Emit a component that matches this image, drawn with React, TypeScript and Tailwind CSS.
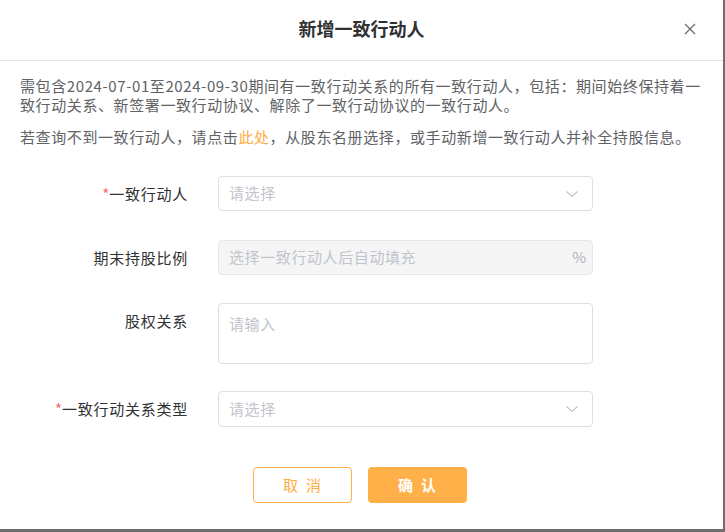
import React from 'react';

const font = { fontFamily: '"Microsoft YaHei", "Noto Sans CJK SC", "Noto Sans", sans-serif' };

function Chevron() {
  return (
    <svg width="14" height="14" viewBox="0 0 14 14" fill="none" className="text-[#c0c4cc]">
      <path d="M1.5 4.5l5.5 5 5.5-5" stroke="currentColor" strokeWidth="1.1" />
    </svg>
  );
}

function Label({ text, required }: { text: string; required?: boolean }) {
  return (
    <div className="w-[188px] shrink-0 text-right text-[15px] leading-[35px] tracking-[0.75px] text-[#303133]">
      {required && <span className="text-[#f56c6c] tracking-normal">*</span>}
      {text}
    </div>
  );
}

export default function App() {
  return (
    <div className="w-[725px] h-[532px] bg-[#6e6e6e] overflow-hidden" style={font}>
      <div className="w-[723px] h-[529px] bg-white flex flex-col">
        {/* Header */}
        <div className="relative h-[61px] shrink-0 border-b border-[#e4e4e4] flex items-center justify-center pb-[3px]">
          <span className="text-[18px] font-bold text-[#303133]">新增一致行动人</span>
          <svg className="absolute right-[27px] top-[23px]" width="12" height="12" viewBox="0 0 12 12" fill="none">
            <path d="M1 1l10 10M11 1L1 11" stroke="#666" strokeWidth="1.1" />
          </svg>
        </div>

        {/* Notice */}
        <div className="px-[20px] pt-[15px] text-[15px] leading-[19px] tracking-[0.6px] text-[#606266]">
          <p>
            <span className="block whitespace-nowrap">需包含2024-07-01至2024-09-30期间有一致行动关系的所有一致行动人，包括：期间始终保持着一</span>
            <span className="block whitespace-nowrap">致行动关系、新签署一致行动协议、解除了一致行动协议的一致行动人。</span>
          </p>
          <p className="mt-[13px] whitespace-nowrap">
            若查询不到一致行动人，请点击<span className="text-[#ffad42]">此处</span>，从股东名册选择，或手动新增一致行动人并补全持股信息。
          </p>
        </div>

        {/* Form */}
        <div className="mt-[30px] flex flex-col">
          <div className="flex items-start gap-[30px]">
            <Label text="一致行动人" required />
            <div className="w-[375px] h-[35px] border border-[#dcdfe6] rounded-[4px] flex items-center justify-between pl-[10px] pr-[13px]">
              <span className="text-[15px] tracking-[0.6px] text-[#c0c4cc]">请选择</span>
              <Chevron />
            </div>
          </div>

          <div className="flex items-start gap-[30px] mt-[29px]">
            <Label text="期末持股比例" />
            <div className="w-[375px] h-[35px] border border-[#e4e7ed] bg-[#f5f5f6] rounded-[4px] flex items-center justify-between pl-[10px] pr-[6px]">
              <span className="text-[15px] tracking-[0.6px] text-[#c0c4cc]">选择一致行动人后自动填充</span>
              <span className="text-[15px] text-[#b0b3b8]">%</span>
            </div>
          </div>

          <div className="flex items-start gap-[30px] mt-[28px]">
            <Label text="股权关系" />
            <div className="w-[375px] h-[61px] border border-[#dcdfe6] rounded-[4px] pl-[10px] pt-[7px]">
              <span className="text-[15px] leading-[19px] tracking-[0.6px] text-[#c0c4cc]">请输入</span>
            </div>
          </div>

          <div className="flex items-start gap-[30px] mt-[27px]">
            <Label text="一致行动关系类型" required />
            <div className="w-[375px] h-[36px] border border-[#dcdfe6] rounded-[4px] flex items-center justify-between pl-[10px] pr-[13px]">
              <span className="text-[15px] tracking-[0.6px] text-[#c0c4cc]">请选择</span>
              <Chevron />
            </div>
          </div>
        </div>

        {/* Footer */}
        <div className="mt-[40px] flex justify-center gap-[16px] pr-[4px]">
          <button className="w-[99px] h-[36px] rounded-[4px] border border-[#ffb049] bg-white text-[15px] text-[#ffad42] tracking-[8px] pl-[8px]">
            取消
          </button>
          <button className="w-[99px] h-[36px] rounded-[4px] bg-[#ffb049] text-[15px] text-white font-bold tracking-[8px] pl-[8px]">
            确认
          </button>
        </div>
      </div>
    </div>
  );
}
